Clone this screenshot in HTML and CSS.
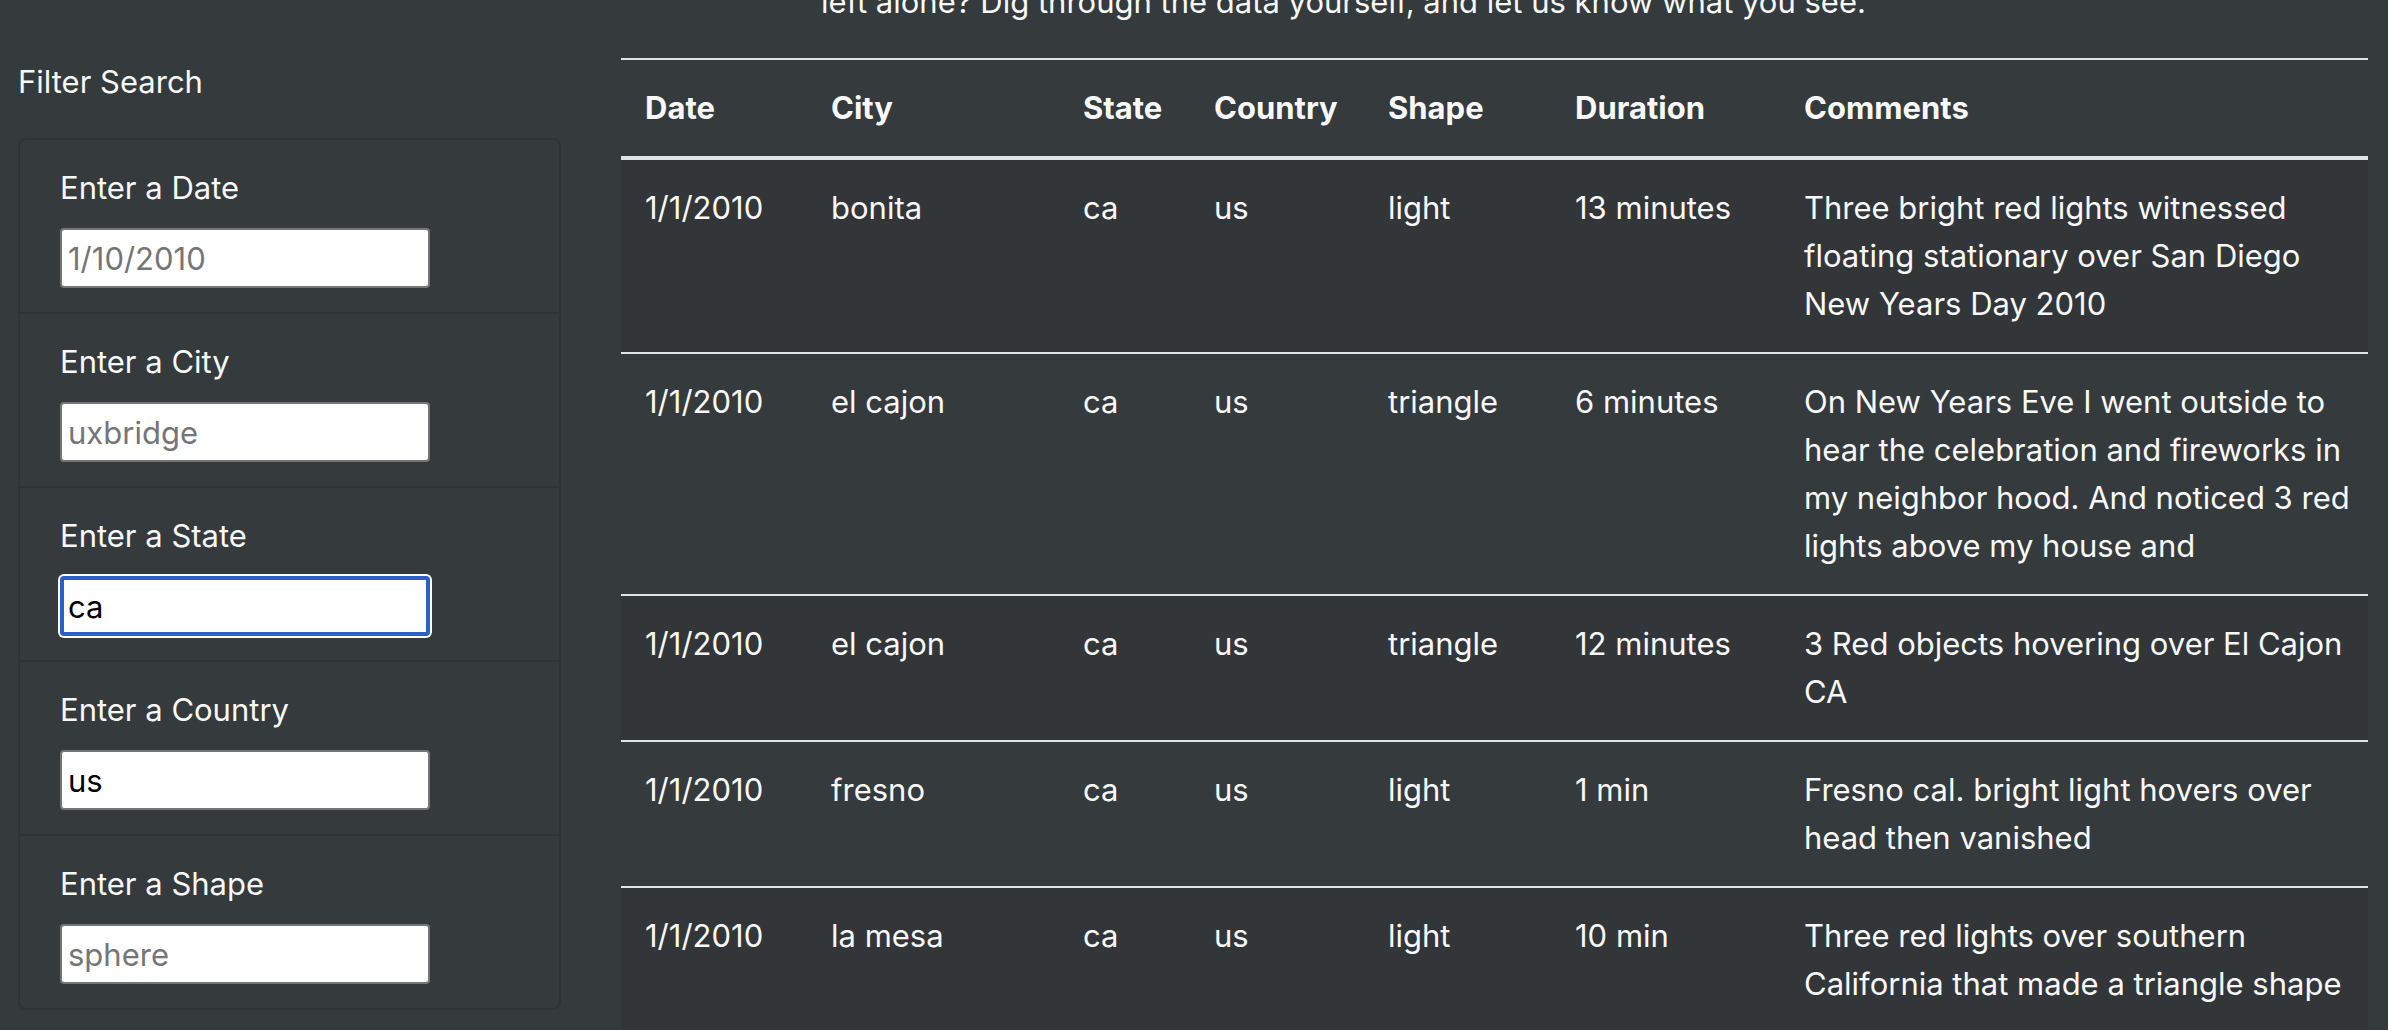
FILE: index.html
```html
<!DOCTYPE html>
<html lang="en">
<head>
<meta charset="utf-8">
<title>UFO Sightings</title>
<link rel="stylesheet" href="styles.css">
</head>
<body>
<div class="page">
  <aside class="sidebar">
    <p class="sidebar-title">Filter Search</p>
    <form>
      <ul class="filters">
        <li class="filter"><label for="date">Enter a Date</label><input id="date" type="text" placeholder="1/10/2010"></li>
        <li class="filter"><label for="city">Enter a City</label><input id="city" type="text" placeholder="uxbridge"></li>
        <li class="filter"><label for="state">Enter a State</label><input id="state" class="active" type="text" value="ca"></li>
        <li class="filter"><label for="country">Enter a Country</label><input id="country" type="text" value="us"></li>
        <li class="filter"><label for="shape">Enter a Shape</label><input id="shape" type="text" placeholder="sphere"></li>
      </ul>
    </form>
  </aside>
  <main class="results">
    <p class="intro">left alone? Dig through the data yourself, and let us know what you see.</p>
    <table class="sightings">
      <colgroup>
        <col class="col-date"><col class="col-city"><col class="col-state"><col class="col-country"><col class="col-shape"><col class="col-duration"><col>
      </colgroup>
      <thead>
        <tr><th>Date</th><th>City</th><th>State</th><th>Country</th><th>Shape</th><th>Duration</th><th>Comments</th></tr>
      </thead>
      <tbody>
        <tr><td>1/1/2010</td><td>bonita</td><td>ca</td><td>us</td><td>light</td><td>13 minutes</td><td>Three bright red lights witnessed floating stationary over San Diego New Years Day 2010</td></tr>
        <tr><td>1/1/2010</td><td>el cajon</td><td>ca</td><td>us</td><td>triangle</td><td>6 minutes</td><td>On New Years Eve I went outside to hear the celebration and fireworks in my neighbor hood. And noticed 3 red lights above my house and</td></tr>
        <tr><td>1/1/2010</td><td>el cajon</td><td>ca</td><td>us</td><td>triangle</td><td>12 minutes</td><td>3 Red objects hovering over El Cajon CA</td></tr>
        <tr><td>1/1/2010</td><td>fresno</td><td>ca</td><td>us</td><td>light</td><td>1 min</td><td>Fresno cal. bright light hovers over head then vanished</td></tr>
        <tr><td>1/1/2010</td><td>la mesa</td><td>ca</td><td>us</td><td>light</td><td>10 min</td><td>Three red lights over southern California that made a triangle shape</td></tr>
      </tbody>
    </table>
  </main>
</div>
</body>
</html>
```
FILE: styles.css
```css
* { box-sizing: border-box; }

body {
  margin: 0;
  background: #353a3d;
  color: #f8f8f8;
  font-family: Inter, "Liberation Sans", sans-serif;
  font-size: 31px;
  line-height: 48px;
}

p { margin: 0; }

/* The page is scrolled part of the way down its intro paragraph */
.page {
  display: grid;
  grid-template-columns: 1fr 3fr;
  margin-top: -22px;
}

.sidebar { padding: 80px 36px 0 18px; }
.sidebar-title { margin-bottom: 32px; }

.filters {
  margin: 0;
  padding: 0;
  list-style: none;
  border: 2px solid #2f3336;
  border-radius: 8px;
}

.filter { padding: 24px 40px; }
.filter + .filter { border-top: 2px solid #2f3336; }

label {
  display: block;
  margin-bottom: 16px;
}

input {
  display: block;
  width: 370px;
  max-width: 100%;
  height: 60px;
  padding: 0 6px;
  border: 2px solid #767676;
  border-radius: 4px;
  background: #fff;
  color: #000;
  font: inherit;
}

input::placeholder { color: #757575; }

input.active,
input:focus {
  padding: 0 4px;
  border: 4px solid #2a60c8;
  outline: none;
  box-shadow: 0 0 0 2px #fff;
}

.results {
  min-width: 0;
  padding: 0 20px 0 24px;
}

.intro {
  margin-bottom: 32px;
  padding-left: 200px;
}

.sightings {
  width: 100%;
  table-layout: fixed;
  border-spacing: 0;
  text-align: left;
}

.col-date { width: 186px; }
.col-city { width: 252px; }
.col-state { width: 131px; }
.col-country { width: 174px; }
.col-shape { width: 187px; }
.col-duration { width: 229px; }

th, td {
  padding: 24px 0 24px 24px;
  border-top: 2px solid #dfe4e6;
  vertical-align: top;
}

th {
  border-bottom: 4px solid #dfe4e6;
  font-weight: 700;
}

td:last-child { padding-right: 12px; }
tbody tr:first-child td { border-top: 0; }
tbody tr:nth-child(odd) { background: #323639; }
```
